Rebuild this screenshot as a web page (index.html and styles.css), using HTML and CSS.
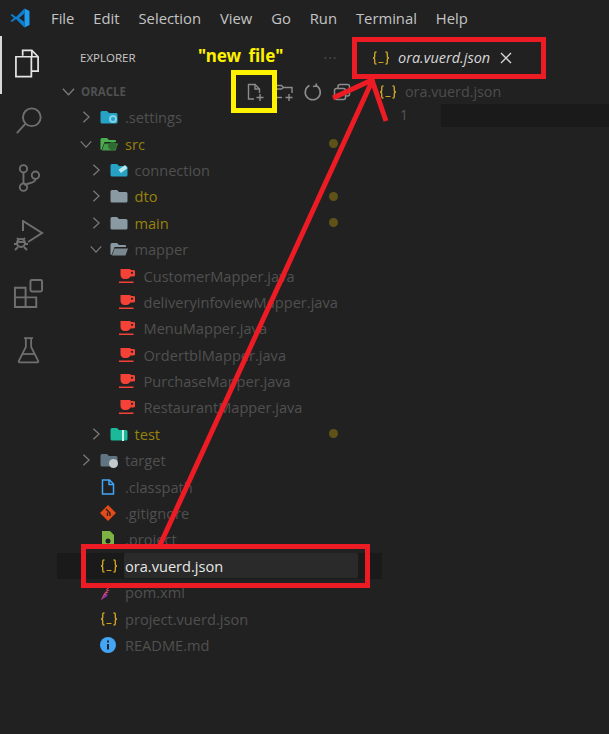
FILE: index.html
```html
<!DOCTYPE html>
<html lang="en">
<head>
<meta charset="utf-8">
<title>Explorer</title>
<link rel="stylesheet" href="styles.css">
</head>
<body>
<svg class="defs" width="0" height="0" aria-hidden="true">
  <defs>
    <symbol id="chev-r" viewBox="0 0 16 16"><path d="M5 2l6.500 6L5 14" fill="none" stroke="currentColor" stroke-width="1.400"/></symbol>
    <symbol id="chev-d" viewBox="0 0 16 16"><path d="M2 5l6 6.500L14 5" fill="none" stroke="currentColor" stroke-width="1.400"/></symbol>
    <symbol id="folder" viewBox="0 0 18 16"><path d="M2 2h5l2 2h7q1.500 0 1.500 1.500V13q0 1.500-1.500 1.500H2Q.5 14.500.5 13V3.500Q.5 2 2 2z" fill="currentColor"/></symbol>
    <symbol id="folder-open" viewBox="0 0 18 16"><path d="M2 2h5l2 2h6q1 0 1 1v1H4.500L1.500 14Q.5 14 .5 13V3.500Q.5 2 2 2z" fill="currentColor"/><path d="M4.500 7.500H18l-2.500 7H2z" fill="currentColor" opacity=".85"/></symbol>
    <symbol id="java" viewBox="0 0 16 16"><path d="M1.500 1h10v1H14a2 2 0 0 1 0 6.500h-2.700c-.6 1.600-2 2.500-3.800 2.500H5.500c-2.300 0-4-1.700-4-4z" fill="#f44336"/><circle cx="13" cy="4.800" r="1.100" fill="#212121"/><path d="M0 13.500h14.500V15H0z" fill="#f44336"/></symbol>
    <symbol id="braces" viewBox="0 0 18 14"><g fill="none" stroke="#c9a227" stroke-width="1.400"><path d="M4.500 1H4Q2.700 1 2.700 2.500V5Q2.700 7 1 7Q2.700 7 2.700 9V11.500Q2.700 13 4 13H4.500"/><path d="M13.500 1h.5q1.300 0 1.300 1.500V5Q15.300 7 17 7q-1.700 0-1.700 2v2.500Q15.300 13 14 13h-.5"/></g><path d="M6.500 11.500h5" stroke="#c9a227" stroke-width="1"/></symbol>
  </defs>
</svg>

<header class="menubar">
  <svg class="logo" viewBox="0 0 20 20" width="20" height="20"><path d="M14.500 0.500L19.500 3v14l-5 2.500z" fill="#1f9cf0"/><path d="M14.500.5L6 9 2 6 .5 7l3.500 3-3.500 3L2 14l4-3 8.500 8.500V14L9 10l5.500-4.500z" fill="#0e7fd0"/></svg>
  <nav class="menu">
    <span>File</span><span>Edit</span><span>Selection</span><span>View</span><span>Go</span><span>Run</span><span>Terminal</span><span>Help</span>
  </nav>
</header>

<main class="workbench">
  <aside class="activity">
    <div class="act act-on">
      <svg viewBox="0 0 28 30" width="27" height="29"><g fill="none" stroke="currentColor" stroke-width="1.800"><path d="M9 7V1.500h9.500l6.500 6.500v15H18"/><path d="M18.500 1.500V8H25"/><path d="M2 8h16v20.500H2z"/></g></svg>
    </div>
    <div class="act">
      <svg viewBox="0 0 30 30" width="28" height="28"><circle cx="18" cy="11" r="9.500" fill="none" stroke="currentColor" stroke-width="2"/><path d="M11 18L2 28" stroke="currentColor" stroke-width="2"/></svg>
    </div>
    <div class="act">
      <svg viewBox="0 0 26 32" width="24" height="30"><g fill="none" stroke="currentColor" stroke-width="2"><circle cx="7" cy="6" r="4"/><circle cx="7" cy="26" r="4"/><circle cx="20" cy="13" r="4"/><path d="M7 10v12M20 17c0 5-9 4-12 7"/></g></svg>
    </div>
    <div class="act">
      <svg viewBox="0 0 32 32" width="32" height="32"><g fill="none" stroke="currentColor" stroke-width="2"><path d="M10 11V1l19 12-14 9"/><circle cx="8" cy="23" r="4"/><path d="M4 18l2 2M12 18l-2 2M1 24h3M12 24h3M2 30l3-3M14 30l-3-3M4 22h8"/></g></svg>
    </div>
    <div class="act">
      <svg viewBox="0 0 32 32" width="31" height="31"><g fill="none" stroke="currentColor" stroke-width="2"><path d="M2 10h11v20H2zM2 20h22v10H13"/><rect x="18" y="2" width="12" height="12" rx="1.500"/></g></svg>
    </div>
    <div class="act">
      <svg viewBox="0 0 26 30" width="23" height="27"><g fill="none" stroke="currentColor" stroke-width="2"><path d="M8 1h10M10 1v10L2 27q-.5 1.500 1 1.500h20q1.500 0 1-1.500L16 11V1"/><path d="M6 19h14"/></g></svg>
    </div>
  </aside>

  <section class="sidebar">
    <div class="side-title">
      <span class="side-name">EXPLORER</span>
      <span class="dots">···</span>
    </div>
    <div class="section">
      <svg class="twist-root"><use href="#chev-d"/></svg>
      <span class="section-name">ORACLE</span>
      <div class="actions">
        <svg viewBox="0 0 20 20" width="20" height="20"><g fill="none" stroke="currentColor" stroke-width="1.400"><path d="M9 17H3.500V2.500h6.500l4.500 4.500v4"/><path d="M10 2.500V7h4.500"/><path d="M15 12v7M11.500 15.500h7"/></g></svg>
        <svg viewBox="0 0 20 20" width="20" height="20"><g fill="none" stroke="currentColor" stroke-width="1.400"><path d="M8 15.500H1.500V3.500h6l2 2h8.500v5.500M1.500 7h6l2-1.500"/><path d="M15 12v7M11.500 15.500h7"/></g></svg>
        <svg viewBox="0 0 20 20" width="20" height="20"><path d="M13 3.500a7.500 7.500 0 1 1-6.500 0M13.500 1.500L13 4l-3 .5" fill="none" stroke="currentColor" stroke-width="1.600"/></svg>
        <svg viewBox="0 0 20 20" width="20" height="20"><g fill="none" stroke="currentColor" stroke-width="1.500"><rect x="2.500" y="6.500" width="11" height="11" rx="2"/><path d="M6 6V4.500A2 2 0 0 1 8 2.500h7.500a2 2 0 0 1 2 2V12a2 2 0 0 1-2 2h-2M5 12h6"/></g></svg>
      </div>
    </div>
    <div class="tree">
      <div class="row d1"><svg class="twist"><use href="#chev-r"/></svg><span class="ico"><svg class="folder c-cyan"><use href="#folder"/></svg><i class="gear"></i></span><span class="name">.settings</span></div>
      <div class="row d1"><svg class="twist"><use href="#chev-d"/></svg><span class="ico"><svg class="folder c-green"><use href="#folder-open"/></svg><i class="code"></i></span><span class="name mod">src</span><i class="dot"></i></div>
      <div class="row d2"><svg class="twist"><use href="#chev-r"/></svg><span class="ico"><svg class="folder c-cyan"><use href="#folder"/></svg><i class="link"></i></span><span class="name">connection</span></div>
      <div class="row d2"><svg class="twist"><use href="#chev-r"/></svg><span class="ico"><svg class="folder c-grey"><use href="#folder"/></svg></span><span class="name mod">dto</span><i class="dot"></i></div>
      <div class="row d2"><svg class="twist"><use href="#chev-r"/></svg><span class="ico"><svg class="folder c-grey"><use href="#folder"/></svg></span><span class="name mod">main</span><i class="dot"></i></div>
      <div class="row d2"><svg class="twist"><use href="#chev-d"/></svg><span class="ico"><svg class="folder c-grey"><use href="#folder-open"/></svg></span><span class="name">mapper</span></div>
      <div class="row d3"><span class="twist-gap"></span><span class="ico"><svg class="file"><use href="#java"/></svg></span><span class="name">CustomerMapper.java</span></div>
      <div class="row d3"><span class="twist-gap"></span><span class="ico"><svg class="file"><use href="#java"/></svg></span><span class="name">deliveryinfoviewMapper.java</span></div>
      <div class="row d3"><span class="twist-gap"></span><span class="ico"><svg class="file"><use href="#java"/></svg></span><span class="name">MenuMapper.java</span></div>
      <div class="row d3"><span class="twist-gap"></span><span class="ico"><svg class="file"><use href="#java"/></svg></span><span class="name">OrdertblMapper.java</span></div>
      <div class="row d3"><span class="twist-gap"></span><span class="ico"><svg class="file"><use href="#java"/></svg></span><span class="name">PurchaseMapper.java</span></div>
      <div class="row d3"><span class="twist-gap"></span><span class="ico"><svg class="file"><use href="#java"/></svg></span><span class="name">RestaurantMapper.java</span></div>
      <div class="row d2"><svg class="twist"><use href="#chev-r"/></svg><span class="ico"><svg class="folder c-teal"><use href="#folder"/></svg><i class="zip"></i></span><span class="name mod">test</span><i class="dot"></i></div>
      <div class="row d1"><svg class="twist"><use href="#chev-r"/></svg><span class="ico"><svg class="folder c-slate"><use href="#folder"/></svg><i class="disc"></i></span><span class="name">target</span></div>
      <div class="row d1"><span class="twist-gap"></span><span class="ico"><svg class="file" viewBox="0 0 16 16"><path d="M2.500 1h7l4 4v10h-11z M9 1v4.500h4.500" fill="none" stroke="#42a5f5" stroke-width="1.500"/></svg></span><span class="name">.classpath</span></div>
      <div class="row d1"><span class="twist-gap"></span><span class="ico"><svg class="file" viewBox="0 0 16 16"><path d="M8 0l8 8-8 8-8-8z" fill="#e64a19"/><path d="M6 4l4 4v3M7.500 7.500V11" stroke="#212121" stroke-width="1.300" fill="none"/></svg></span><span class="name">.gitignore</span></div>
      <div class="row d1"><span class="twist-gap"></span><span class="ico"><svg class="file" viewBox="0 0 16 16"><path d="M2 0h8l4 4v12H2z" fill="#7cb342"/><circle cx="8" cy="10" r="2.500" fill="#212121"/></svg></span><span class="name">.project</span></div>
      <div class="row d1 row-edit"><span class="twist-gap"></span><span class="ico"><svg class="file brace"><use href="#braces"/></svg></span><span class="input">ora.vuerd.json</span></div>
      <div class="row d1"><span class="twist-gap"></span><span class="ico"><svg class="file" viewBox="0 0 16 16"><path d="M15 0L9 2 6 6h4L6 8h3L5 10h3l-4 2h3L1 16C4 8 9 3 15 0z" fill="#e0457b"/><path d="M5 10.500L1 16l7-5z" fill="#7b35b5"/></svg></span><span class="name">pom.xml</span></div>
      <div class="row d1"><span class="twist-gap"></span><span class="ico"><svg class="file brace"><use href="#braces"/></svg></span><span class="name">project.vuerd.json</span></div>
      <div class="row d1"><span class="twist-gap"></span><span class="ico"><svg class="file" viewBox="0 0 16 16"><circle cx="8" cy="8" r="8" fill="#42a5f5"/><path d="M7 3.500h2v2H7zM7 7h2v5.500H7z" fill="#212121"/></svg></span><span class="name">README.md</span></div>
    </div>
  </section>

  <section class="editor">
    <div class="tabs">
      <div class="tab">
        <svg class="file brace"><use href="#braces"/></svg>
        <span class="tab-name">ora.vuerd.json</span>
        <svg class="close" viewBox="0 0 12 12" width="12" height="12"><path d="M1 1l10 10M11 1L1 11" stroke="currentColor" stroke-width="1.400"/></svg>
      </div>
    </div>
    <div class="crumb">
      <svg class="file brace"><use href="#braces"/></svg>
      <span>ora.vuerd.json</span>
    </div>
    <div class="line">
      <span class="lnum">1</span>
      <span class="lcode"></span>
    </div>
  </section>
</main>

<div class="note">"new file"</div>
<svg class="marks" width="609" height="734" viewBox="0 0 609 734" aria-hidden="true">
  <rect x="233.500" y="72.500" width="41" height="38" fill="none" stroke="#fff200" stroke-width="5"/>
  <g fill="none" stroke="#ed1c24" stroke-width="5">
    <rect x="354.500" y="39.500" width="189" height="37"/>
    <rect x="83.500" y="546.500" width="284" height="39"/>
    <path d="M160 545L373 79"/>
    <path d="M333 98L372 80L386 121"/>
  </g>
</svg>
</body>
</html>
```
FILE: styles.css
```css
* { box-sizing: border-box; }
html, body { margin: 0; height: 100%; }
body {
  position: relative;
  width: 609px;
  height: 734px;
  overflow: hidden;
  background: #212121;
  color: #505050;
  font-family: "Open Sans", "Noto Sans", sans-serif;
  font-size: 14px;
  display: flex;
  flex-direction: column;
}
.defs { position: absolute; }

.menubar { height: 36px; flex: none; display: flex; align-items: center; padding-left: 10px; }
.logo { flex: none; }
.menu { display: flex; gap: 18.900px; margin: 0 0 1px 21px; color: #c4c4c4; font-size: 14.800px; }

.workbench { flex: 1; display: flex; min-height: 0; }

.activity { width: 57px; flex: none; display: flex; flex-direction: column; }
.act { height: 57.500px; display: flex; align-items: center; justify-content: center; color: #6f6f6f; }
.act svg { margin-bottom: 2.600px; }
.act-on { color: #e4e4e4; border-left: 2px solid #d8d8d8; padding-right: 4px; }

.sidebar { width: 305px; flex: none; display: flex; flex-direction: column; }
.side-title { height: 43px; flex: none; display: flex; align-items: center; padding-left: 23px; }
.side-name { color: #c8c8c8; font-size: 11.500px; }
.dots { margin-left: 188px; color: #4d4d4d; font-size: 14px; letter-spacing: 1px; }
.section { height: 25px; flex: none; display: flex; align-items: center; padding-left: 4px; }
.twist-root { width: 15px; height: 15px; color: #7b7b7b; flex: none; }
.section-name { margin-left: 5px; color: #505050; font-size: 11.500px; font-weight: 700; }
.actions { display: flex; gap: 9px; margin-left: 119px; color: #8c8c8c; }

.tree { display: grid; grid-auto-rows: 26.400px; }
.row { display: flex; align-items: center; padding-right: 24px; font-size: 14.600px; }
.row > .dot { margin-right: 20px; }
.d1 { padding-left: 22px; }
.d2 { padding-left: 31.500px; }
.d3 { padding-left: 40.500px; }
.twist { width: 14px; height: 14px; margin-right: 7px; color: #7b7b7b; flex: none; }
.twist-gap { width: 21px; flex: none; }
.ico { position: relative; width: 25px; display: flex; align-items: center; flex: none; }
.folder { width: 18px; height: 16px; }
.file { width: 16px; height: 16px; }
.brace { width: 18px; height: 14px; }
.c-cyan { color: #26a3c4; }
.c-green { color: #4caf50; }
.c-grey { color: #8a9aa3; }
.c-teal { color: #1bb89a; }
.c-slate { color: #5f7682; }
.name { white-space: nowrap; }
.mod { color: #97830c; }
.dot { width: 9px; height: 9px; margin-left: auto; border-radius: 50%; background: #5f5218; }

.gear, .code, .link, .zip, .disc { position: absolute; display: block; }
.gear { left: 9px; top: 6px; width: 8px; height: 8px; border-radius: 50%; border: 2.500px solid #7ed3e8; }
.code { left: 8px; top: 6px; width: 9px; height: 8px; border-radius: 50%; background: #2e6b33; }
.link { left: 9px; top: 5px; width: 8px; height: 4px; background: #b8e6f2; transform: rotate(-35deg); }
.zip { left: 12px; top: 4px; width: 2px; height: 11px; background: #c9f2e8; }
.disc { left: 9px; top: 7px; width: 9px; height: 9px; border-radius: 50%; background: #c4c9cc; }

.row-edit { background: #1a1a1a; }
.input {
  flex: 0 0 234px;
  height: 25px;
  margin-left: -1px;
  padding-left: 1px;
  display: flex;
  align-items: center;
  background: #2a2a2a;
  border-radius: 2px;
  color: #e6e6e6;
}

.editor { flex: 1; min-width: 0; display: flex; flex-direction: column; }
.tabs { height: 43px; flex: none; display: flex; }
.tab { display: flex; align-items: center; padding-left: 10px; }
.tab-name { margin-left: 8px; color: #d6d6d6; font-style: italic; font-size: 14.500px; }
.close { margin-left: 10px; color: #d6d6d6; }
.crumb { height: 25px; flex: none; display: flex; align-items: center; padding-left: 17px; gap: 8px; color: #4d4d4d; font-size: 14.300px; }
.line { height: 23px; flex: none; display: flex; align-items: center; }
.lnum { width: 79px; padding-left: 38px; color: #555; font-size: 14px; margin-bottom: 2px; }
.lcode { flex: 1; height: 100%; background: #1a1a1a; }

.note {
  position: absolute;
  left: 198px;
  top: 44px;
  color: #fff200;
  font-size: 17px;
  font-weight: 700;
  word-spacing: 3px;
  white-space: pre;
  font-family: "Noto Sans", sans-serif;
}
.marks { position: absolute; left: 0; top: 0; pointer-events: none; }
```
